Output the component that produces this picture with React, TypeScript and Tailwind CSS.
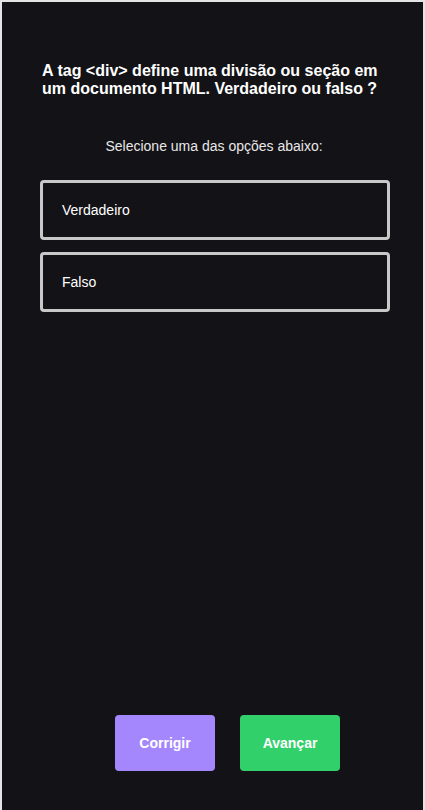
import React from 'react';

const options = ['Verdadeiro', 'Falso'];

export default function App() {
  return (
    <div className="min-h-screen bg-[#e4e4e4] pt-[2px] px-[2px]" style={{ fontFamily: '"Liberation Sans", Arial, sans-serif' }}>
      <div className="h-[808px] bg-[#131216] flex flex-col">
        {/* Question */}
        <h1 className="mt-[60px] px-[40px] text-white font-bold text-[16px] leading-[18px]">
          A tag &lt;div&gt; define uma divisão ou seção em um documento HTML. Verdadeiro ou falso ?
        </h1>

        <p className="mt-[40px] text-center text-[#e8e8e8] text-[14px] leading-[16px] pl-[3px]">
          Selecione uma das opções abaixo:
        </p>

        {/* Options */}
        <div className="mt-[26px] ml-[38px] w-[350px] flex flex-col gap-[12px]">
          {options.map((o) => (
            <button
              key={o}
              className="h-[60px] rounded-[4px] border-[3px] border-[#c8c8c8] bg-transparent text-left pl-[19px] text-white text-[14px]"
            >
              {o}
            </button>
          ))}
        </div>

        {/* Actions */}
        <div className="mt-auto mb-[39px] flex justify-center gap-[25px] pl-[30px]">
          <button className="w-[100px] h-[56px] rounded-[4px] bg-[#a587fd] text-white font-bold text-[14px]">
            Corrigir
          </button>
          <button className="w-[100px] h-[56px] rounded-[4px] bg-[#31d06b] text-white font-bold text-[14px]">
            Avançar
          </button>
        </div>
      </div>
    </div>
  );
}
